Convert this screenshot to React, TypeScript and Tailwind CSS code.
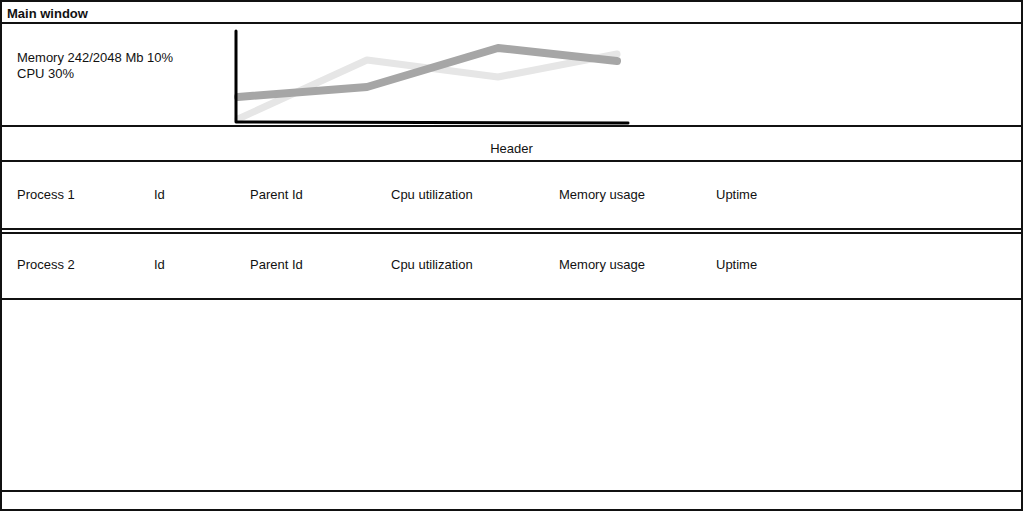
import React from "react";

const columns = ["Id", "Parent Id", "Cpu utilization", "Memory usage", "Uptime"];

const ProcessRow: React.FC<{ name: string; className?: string }> = ({ name, className }) => (
  <div className={`flex items-center h-[68px] px-[15px] border-[#111] ${className ?? ""}`}>
    <span className="w-[137px]">{name}</span>
    <span className="w-[96px]">{columns[0]}</span>
    <span className="w-[141px]">{columns[1]}</span>
    <span className="w-[168px]">{columns[2]}</span>
    <span className="w-[157px]">{columns[3]}</span>
    <span>{columns[4]}</span>
  </div>
);

const UsageChart: React.FC = () => (
  <svg width="400" height="100" viewBox="0 0 400 100" className="block">
    {/* light series */}
    <polyline
      points="4,92 133,33 264,50 383,27"
      fill="none"
      stroke="#e6e6e6"
      strokeWidth="7"
      strokeLinejoin="round"
      strokeLinecap="round"
    />
    {/* dark series */}
    <polyline
      points="4,70 133,60 264,21 383,34"
      fill="none"
      stroke="#a6a6a6"
      strokeWidth="8"
      strokeLinejoin="round"
      strokeLinecap="round"
    />
    {/* axes */}
    <polyline
      points="2,4 2,95 394,96"
      fill="none"
      stroke="#000"
      strokeWidth="3"
      strokeLinejoin="round"
      strokeLinecap="round"
    />
  </svg>
);

export default function App() {
  return (
    <div
      className="w-[1023px] h-[511px] bg-white text-[13px] text-[#111] flex flex-col border-2 border-[#111]"
      style={{ fontFamily: '"Liberation Sans", Arial, sans-serif' }}
    >
      {/* Title bar */}
      <div className="h-[22px] flex items-center px-[5px] pt-[3px] font-bold border-b-2 border-[#111] shrink-0">
        Main window
      </div>

      {/* Stats */}
      <div className="h-[103px] flex border-b-2 border-[#111] shrink-0">
        <div className="w-[232px] pl-[15px] pt-[26px] leading-[16px]">
          <div>Memory 242/2048 Mb 10%</div>
          <div>CPU 30%</div>
        </div>
        <div className="pt-[3px]">
          <UsageChart />
        </div>
      </div>

      {/* Header */}
      <div className="h-[35px] flex items-center justify-center pt-[10px] border-b-2 border-[#111] shrink-0">
        Header
      </div>

      <ProcessRow name="Process 1" className="border-b-2 h-[67px]" />
      <ProcessRow name="Process 2" className="border-t-2 border-b-2 mt-[2px] h-[67px] pb-[2px]" />

      {/* Empty area */}
      <div className="flex-1 border-b-2 border-[#111]" />

      {/* Status bar */}
      <div className="h-[17px] shrink-0" />
    </div>
  );
}
